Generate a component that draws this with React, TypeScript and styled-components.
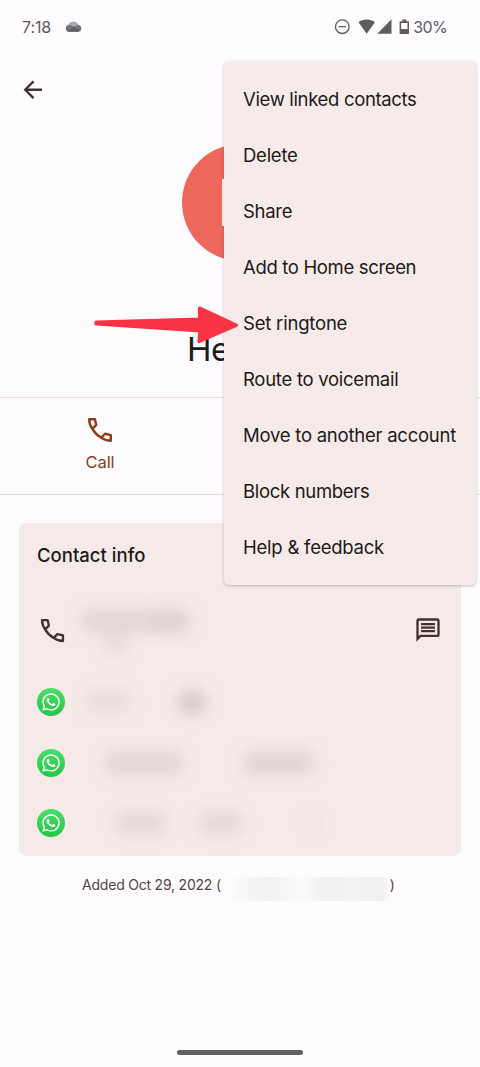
import React from "react";
import styled, { createGlobalStyle } from "styled-components";
import { MdArrowBack, MdOutlineMessage } from "react-icons/md";
import { FaWhatsapp } from "react-icons/fa";

const GlobalStyle = createGlobalStyle`
  * { box-sizing: border-box; }
  body { margin: 0; background: #fefbff; }
`;

const Screen = styled.div`
  position: relative;
  display: flex;
  flex-direction: column;
  width: 480px;
  height: 1067px;
  overflow: hidden;
  background: #fefbff;
  color: #211a18;
  font-family: Inter, Roboto, sans-serif;
`;

const StatusBar = styled.header`
  display: flex;
  align-items: center;
  justify-content: space-between;
  height: 54px;
  padding: 0 33px 0 22px;
  color: #5d5a5e;
  font-size: 16px;
`;

const StatusGroup = styled.div`
  display: flex;
  align-items: center;
`;

const Clock = styled.span`
  width: 43px;
  letter-spacing: -0.1px;
`;

const Percent = styled.span`
  margin-left: 3px;
  letter-spacing: -0.65px;
`;

const AppBar = styled.nav`
  display: flex;
  align-items: center;
  height: 71px;
  padding-left: 19px;
  color: #43302b;

  svg { display: block; }
`;

const Profile = styled.section`
  display: flex;
  flex-direction: column;
  align-items: center;
  height: 272px;
  padding-top: 19px;
`;

const Avatar = styled.div`
  width: 117px;
  height: 117px;
  padding-left: 35px;
  border-radius: 50%;
  background: #ed675d;
  color: #fff;
  font-size: 64px;
  line-height: 117px;
`;

const Name = styled.h1`
  width: 106px;
  margin: 68px 0 0;
  font-size: 33px;
  font-weight: 400;
  line-height: 40px;
  letter-spacing: -0.5px;
`;

const Actions = styled.div`
  display: flex;
  height: 98px;
  padding-left: 30px;
  border-top: 1px solid #f5dbd0;
  border-bottom: 1px solid #f5dbd0;
`;

const Action = styled.div`
  display: flex;
  flex-direction: column;
  align-items: center;
  width: 140px;
  padding-top: 16px;
  color: #8f3c16;
  font-size: 16.5px;
  line-height: 32px;
  letter-spacing: -0.1px;

  svg { flex: none; }
`;

const Card = styled.section`
  width: 442px;
  height: 333px;
  margin: 28px 0 0 19px;
  border-radius: 7px;
  background: #f5eae8;
`;

const CardTitle = styled.h2`
  margin: 0;
  padding-left: 18px;
  font-size: 18.5px;
  font-weight: 500;
  line-height: 64px;
  letter-spacing: 0.02px;
`;

const InfoRow = styled.div<{ $height: number }>`
  display: flex;
  align-items: center;
  height: ${(p) => p.$height}px;
  padding: 0 19px 0 18px;
  color: #43302b;

  > svg { flex: none; display: block; }
`;

const LinkedRows = styled.div`
  margin-top: -1px;
`;

const WhatsAppBadge = styled.span`
  display: grid;
  place-items: center;
  flex: none;
  width: 28px;
  height: 28px;
  border-radius: 50%;
  background: linear-gradient(#4ade69, #24c747);
  color: #fff;
`;

const Redacted = styled.div`
  display: flex;
  flex-direction: column;
  flex: 1;
  padding-top: 4px;
`;

const RedactedLine = styled.div`
  display: flex;
  align-items: center;
`;

const Smudge = styled.span<{ $gap: number; $width: number; $tone?: number }>`
  flex: none;
  width: ${(p) => p.$width}px;
  height: 22px;
  margin-left: ${(p) => p.$gap}px;
  border-radius: 8px;
  background: rgba(90, 75, 75, ${(p) => p.$tone ?? 0.13});
  filter: blur(8px);
`;

const Added = styled.footer`
  display: flex;
  height: 25px;
  margin: 21px 0 0 82px;
  color: #514541;
  font-size: 14px;
  line-height: 16px;
  letter-spacing: -0.21px;
`;

const HiddenSource = styled.span`
  width: 169px;
  height: 24px;
  background: linear-gradient(90deg, #fefbff 4%, #f5f2f5 22%, #f5f2f5 32%, #fcf9fc 48%, #f3f0f3 62%, #f6f3f6 77%, #f2eff2 95%, #fefbff);
`;

const Menu = styled.ul`
  position: absolute;
  top: 61px;
  left: 224px;
  width: 252px;
  margin: 0;
  padding: 10px 0;
  list-style: none;
  border-radius: 5px;
  background: #f6ebe9;
  box-shadow: 0 1px 3px rgba(60, 45, 60, 0.3);
`;

const MenuItem = styled.li<{ $tracking: number }>`
  height: 56px;
  padding-left: 19px;
  font-size: 18.5px;
  line-height: 56px;
  letter-spacing: ${(p) => p.$tracking}px;
  white-space: nowrap;
`;

const Pointer = styled.svg`
  position: absolute;
  top: 304px;
  left: 92px;
`;

const HomeHandle = styled.div`
  width: 126px;
  height: 5px;
  margin: auto 0 12px 177px;
  border-radius: 3px;
  background: #646165;
`;

const menuItems: [string, number][] = [
  ["View linked contacts", -0.34],
  ["Delete", -0.25],
  ["Share", -0.3],
  ["Add to Home screen", -0.34],
  ["Set ringtone", -0.2],
  ["Route to voicemail", -0.27],
  ["Move to another account", -0.24],
  ["Block numbers", -0.32],
  ["Help & feedback", -0.23],
];

const linkedRows = [
  [[20, 46, 0.08], [48, 26, 0.22]],
  [[40, 78, 0.13], [60, 70, 0.14]],
  [[51, 50, 0.11], [34, 42, 0.11], [66, 12, 0.05]],
];

const CallIcon = ({ size }: { size: number }) => (
  <svg
    width={size}
    height={size}
    viewBox="0 0 24 24"
    fill="none"
    stroke="currentColor"
    strokeWidth="1.8"
    strokeLinejoin="round"
  >
    <path d="M3.9 3.9H8.2L9.2 8.2 6.3 11.1C4.700 9 3.900 6.500 3.900 3.900z" />
    <path d="M20.100 20.100V15.800L15.800 14.800 12.900 17.700C15 19.300 17.500 20.100 20.100 20.100z" />
    <path d="M6.300 11.100C7.900 14 10 16.100 12.900 17.700" />
  </svg>
);

const CloudIcon = () => (
  <svg width="17" height="12" viewBox="0 0 17 12">
    <path d="M4 10.8a3.6 3.6 0 0 1-.3-7.1A5 5 0 0 1 13 4a3.4 3.4 0 0 1-.2 6.8z" fill="#777579" />
    <path d="M3.7 3.7A5 5 0 0 1 13 4L9 5.8z" fill="#aaa8ab" />
    <path d="M2 9.9 9 5.8l5.6 4A3 3 0 0 1 13 10.8H4z" fill="#626064" />
  </svg>
);

const StatusIcons = () => (
  <svg width="76" height="18" viewBox="0 0 76 18" fill="#5f5c60">
    <circle cx="8.300" cy="8.700" r="6.800" fill="none" stroke="#5f5c60" strokeWidth="1.300" />
    <path d="M4.800 8h7v1.300h-7z" />
    <path d="M24.500 4.200c2-1.800 5-2.800 8.200-2.800s6.200 1 8.200 2.800L32.700 15.700z" />
    <path d="M43.300 15.700h14.200V1.300z" />
    <path fillRule="evenodd" d="M68.300 1.500h4V3.200h2q.7 0 .7.7V15.200q0 .7-.7.7h-8q-.7 0-.7-.7V3.900q0-.7.7-.7h2zM67.100 4.900v6h6.400V4.900z" />
  </svg>
);

export default function App() {
  return (
    <>
      <GlobalStyle />
      <Screen>
        <StatusBar>
          <StatusGroup>
            <Clock>7:18</Clock>
            <CloudIcon />
          </StatusGroup>
          <StatusGroup>
            <StatusIcons />
            <Percent>30%</Percent>
          </StatusGroup>
        </StatusBar>
        <AppBar>
          <MdArrowBack size={27.5} />
        </AppBar>
        <Profile>
          <Avatar>H</Avatar>
          <Name>He</Name>
        </Profile>
        <Actions>
          <Action>
            <CallIcon size={32} />
            Call
          </Action>
        </Actions>
        <Card>
          <CardTitle>Contact info</CardTitle>
          <InfoRow $height={86}>
            <CallIcon size={31} />
            <Redacted>
              <RedactedLine>
                <Smudge $gap={13} $width={66} />
                <Smudge $gap={0} $width={42} $tone={0.16} />
              </RedactedLine>
              <RedactedLine>
                <Smudge $gap={34} $width={26} $tone={0.07} />
              </RedactedLine>
            </Redacted>
            <MdOutlineMessage size={28} />
          </InfoRow>
          <LinkedRows>
            {linkedRows.map((row, i) => (
              <InfoRow $height={60.5} key={i}>
                <WhatsAppBadge>
                  <FaWhatsapp size={20} />
                </WhatsAppBadge>
                <RedactedLine>
                  {row.map(([gap, width, tone], j) => (
                    <Smudge $gap={gap} $width={width} $tone={tone} key={j} />
                  ))}
                </RedactedLine>
              </InfoRow>
            ))}
          </LinkedRows>
        </Card>
        <Added>
          <span>Added Oct 29, 2022 (</span>
          <HiddenSource />
          <span>)</span>
        </Added>
        <HomeHandle />
        <Menu>
          {menuItems.map(([label, tracking]) => (
            <MenuItem $tracking={tracking} key={label}>{label}</MenuItem>
          ))}
        </Menu>
        <Pointer width="150" height="42" viewBox="0 0 150 42">
          <path
            d="M4 18 107.500 15V4L144.500 21.200 107 37.500 108 27 4 19.800z"
            fill="#fb3445"
            stroke="#fb3445"
            strokeWidth="3.2"
            strokeLinejoin="round"
          />
        </Pointer>
      </Screen>
    </>
  );
}
